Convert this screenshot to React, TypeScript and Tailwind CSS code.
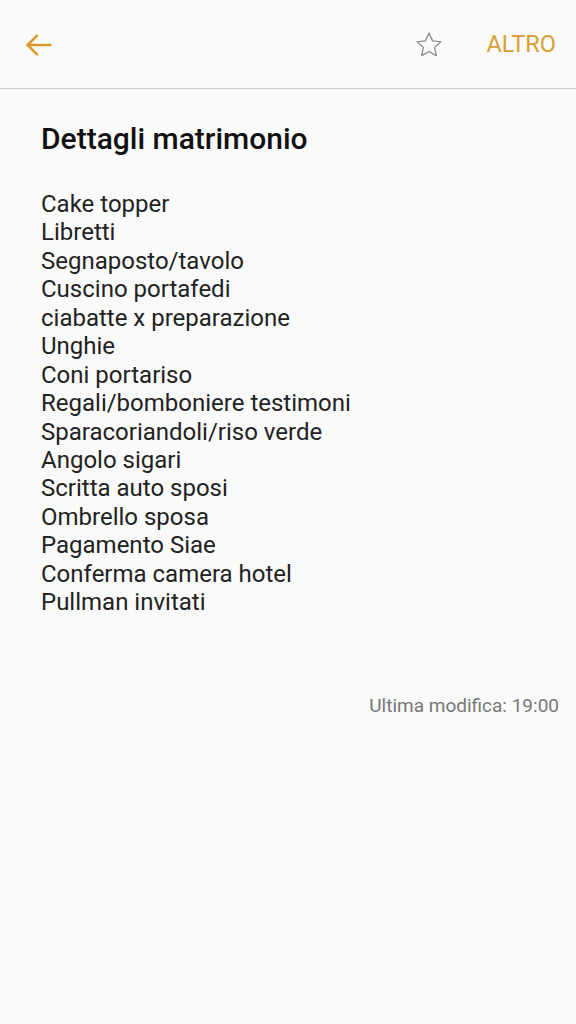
const items = [
  "Cake topper",
  "Libretti",
  "Segnaposto/tavolo",
  "Cuscino portafedi",
  "ciabatte x preparazione",
  "Unghie",
  "Coni portariso",
  "Regali/bomboniere testimoni",
  "Sparacoriandoli/riso verde",
  "Angolo sigari",
  "Scritta auto sposi",
  "Ombrello sposa",
  "Pagamento Siae",
  "Conferma camera hotel",
  "Pullman invitati",
];

export default function App() {
  return (
    <div className="w-[576px] h-[1024px] bg-[#fafafa] font-['Roboto',sans-serif] overflow-hidden">
      {/* Header */}
      <div className="h-[89px] flex items-center justify-between border-b border-[#cfcfcf] pl-[23px] pr-[20px] pt-[2px]">
        <svg width="32" height="32" viewBox="0 0 24 24" fill="none" stroke="#dc9a2c" strokeWidth="1.9" strokeLinecap="round" strokeLinejoin="round">
          <path d="M20.5 12H3.5" />
          <path d="M10.5 5l-7 7 7 7" />
        </svg>
        <div className="flex items-center gap-[42px]">
          <svg width="30" height="30" viewBox="0 0 24 24" fill="none" stroke="#8a8a8a" strokeWidth="1" strokeLinejoin="round">
            <path d="M12 2.5l2.9 6.2 6.6.7-5 4.5 1.4 6.6L12 17.2l-5.9 3.3 1.4-6.6-5-4.5 6.6-.7z" />
          </svg>
          <span className="text-[23.5px] text-[#d99f34]">ALTRO</span>
        </div>
      </div>

      {/* Body */}
      <div className="pl-[41px] pr-[17px] pt-[32px]">
        <h1 className="text-[30px] font-medium text-[#111] leading-[36px]">Dettagli matrimonio</h1>
        <div className="mt-[33px] text-[24px] text-[#222] leading-[28.43px]">
          {items.map((t) => (
            <div key={t}>{t}</div>
          ))}
        </div>
        <div className="mt-[77px] text-right text-[19px] leading-[24px] text-[#777]">Ultima modifica: 19:00</div>
      </div>
    </div>
  );
}
